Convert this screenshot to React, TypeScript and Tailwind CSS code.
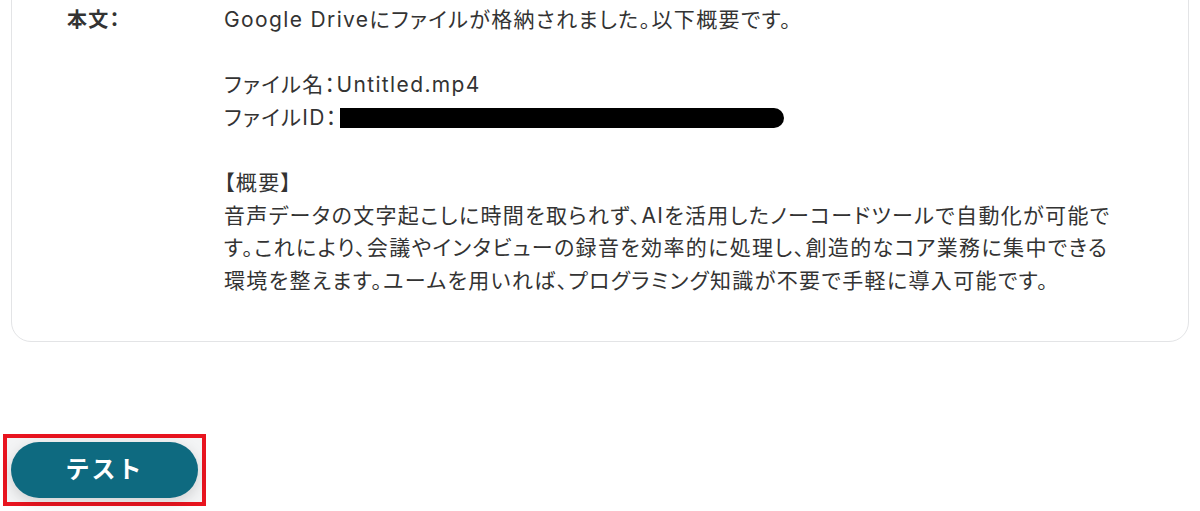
const bodyFont = {
  fontFamily: 'Inter, "Noto Sans CJK JP", sans-serif',
};

export default function App() {
  return (
    <div className="w-[1200px] h-[511px] bg-white overflow-hidden" style={bodyFont}>
      <div className="px-[11px]">
        <div className="-mt-[30px] rounded-[20px] border border-[#e3e4e6] bg-white pt-[33px] pb-[44px]">
          <div className="flex text-[#333] text-[21px] leading-[32.6px] [font-feature-settings:'palt'] tracking-[0.065em]">
            <div className="w-[212px] shrink-0 pl-[55px] text-[20px] tracking-[0.06em] font-bold">本文：</div>
            <div className="flex flex-col whitespace-nowrap">
              <span>Google Driveにファイルが格納されました。以下概要です。</span>
              <span className="h-[32.6px]" />
              <span>ファイル名：Untitled.mp4</span>
              <span className="flex items-center">
                ファイルID：
                <span className="ml-[2px] inline-block h-[20px] w-[444px] rounded-r-full bg-black" />
              </span>
              <span className="h-[32.6px]" />
              <span>【概要】</span>
              <span>音声データの文字起こしに時間を取られず、AIを活用したノーコードツールで自動化が可能で</span>
              <span>す。これにより、会議やインタビューの録音を効率的に処理し、創造的なコア業務に集中できる</span>
              <span>環境を整えます。ユームを用いれば、プログラミング知識が不要で手軽に導入可能です。</span>
            </div>
          </div>
        </div>
      </div>
      <div className="mt-[92px] ml-[3px] inline-flex border-4 border-[#e8141f] bg-[#f3f4f5] p-[4px]">
        <button
          type="button"
          className="h-[56px] w-[187px] rounded-full bg-[#0e6a80] text-[24px] font-bold tracking-[0.08em] text-white shadow-[0_4px_14px_rgba(0,0,0,0.15)]"
        >
          テスト
        </button>
      </div>
    </div>
  );
}
